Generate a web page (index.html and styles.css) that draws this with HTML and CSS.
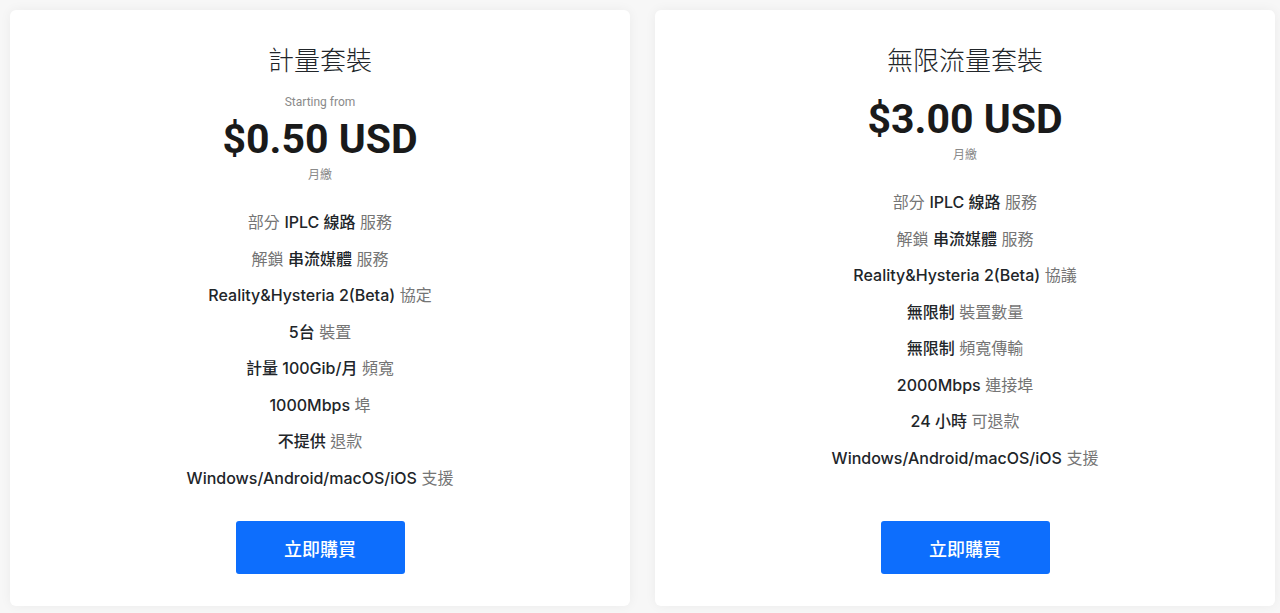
FILE: index.html
```html
<!DOCTYPE html>
<html lang="zh-Hant">
<head>
<meta charset="utf-8">
<link rel="stylesheet" href="styles.css">
</head>
<body>
<div class="plans">
  <div class="card">
    <h3 class="title">計量套裝</h3>
    <div class="from">Starting from</div>
    <div class="price">$0.50 USD</div>
    <div class="cycle">月繳</div>
    <ul class="features">
      <li><span class="muted">部分</span> <b>IPLC 線路</b> <span class="muted">服務</span></li>
      <li><span class="muted">解鎖</span> <b>串流媒體</b> <span class="muted">服務</span></li>
      <li><b>Reality&amp;Hysteria 2(Beta)</b> <span class="muted">協定</span></li>
      <li><b>5台</b> <span class="muted">裝置</span></li>
      <li><b>計量 100Gib/月</b> <span class="muted">頻寬</span></li>
      <li><b>1000Mbps</b> <span class="muted">埠</span></li>
      <li><b>不提供</b> <span class="muted">退款</span></li>
      <li><b>Windows/Android/macOS/iOS</b> <span class="muted">支援</span></li>
    </ul>
    <a class="buy" href="#">立即購買</a>
  </div>
  <div class="card">
    <h3 class="title">無限流量套裝</h3>
    <div class="price">$3.00 USD</div>
    <div class="cycle">月繳</div>
    <ul class="features">
      <li><span class="muted">部分</span> <b>IPLC 線路</b> <span class="muted">服務</span></li>
      <li><span class="muted">解鎖</span> <b>串流媒體</b> <span class="muted">服務</span></li>
      <li><b>Reality&amp;Hysteria 2(Beta)</b> <span class="muted">協議</span></li>
      <li><b>無限制</b> <span class="muted">裝置數量</span></li>
      <li><b>無限制</b> <span class="muted">頻寬傳輸</span></li>
      <li><b>2000Mbps</b> <span class="muted">連接埠</span></li>
      <li><b>24 小時</b> <span class="muted">可退款</span></li>
      <li><b>Windows/Android/macOS/iOS</b> <span class="muted">支援</span></li>
    </ul>
    <a class="buy" href="#">立即購買</a>
  </div>
</div>
</body>
</html>
```
FILE: styles.css
```css
html, body {
  margin: 0;
  padding: 0;
}
body {
  background: #f7f7f7;
  font-family: Inter, "Noto Sans CJK TC", sans-serif;
  color: #212529;
  height: 613px;
  overflow: hidden;
}
.plans {
  display: grid;
  grid-template-columns: 620px 620px;
  column-gap: 25px;
  padding: 10px 5px 0 10px;
  height: 596px;
}
.card {
  background: #fff;
  border-radius: 6px;
  box-shadow: 0 0 12px rgba(0, 0, 0, 0.05);
  display: flex;
  flex-direction: column;
  align-items: center;
  padding: 29px 20px 32px;
  box-sizing: border-box;
}
.title {
  margin: 0;
  font-family: "Noto Sans CJK TC", sans-serif;
  font-weight: 300;
  font-size: 26px;
  line-height: 40px;
  color: #212529;
}
.from {
  margin-top: 14px;
  font-family: Roboto, sans-serif;
  font-size: 12px;
  line-height: 18px;
  color: #8a8a8a;
}
.price {
  margin-top: 2px;
  font-family: Roboto, sans-serif;
  font-weight: 700;
  font-size: 41px;
  line-height: 52px;
  color: #1a1a1a;
}
.card .title + .price {
  margin-top: 14px;
}
.cycle {
  font-family: "Noto Sans CJK TC", sans-serif;
  font-size: 12px;
  line-height: 18px;
  color: #8a8a8a;
}
.features {
  list-style: none;
  margin: 21px 0 0;
  padding: 0;
  text-align: center;
  font-size: 16px;
}
.features li {
  line-height: 36.5px;
  white-space: nowrap;
}
.features b {
  font-weight: 500;
  color: #212529;
}
.muted {
  color: #757575;
  font-weight: 400;
}
.buy {
  margin-top: auto;
  width: 169px;
  height: 53px;
  display: flex;
  align-items: center;
  justify-content: center;
  background: #0d6efd;
  color: #fff;
  text-decoration: none;
  border-radius: 3px;
  font-size: 18px;
  font-weight: 500;
  font-family: "Noto Sans CJK TC", sans-serif;
}
```
